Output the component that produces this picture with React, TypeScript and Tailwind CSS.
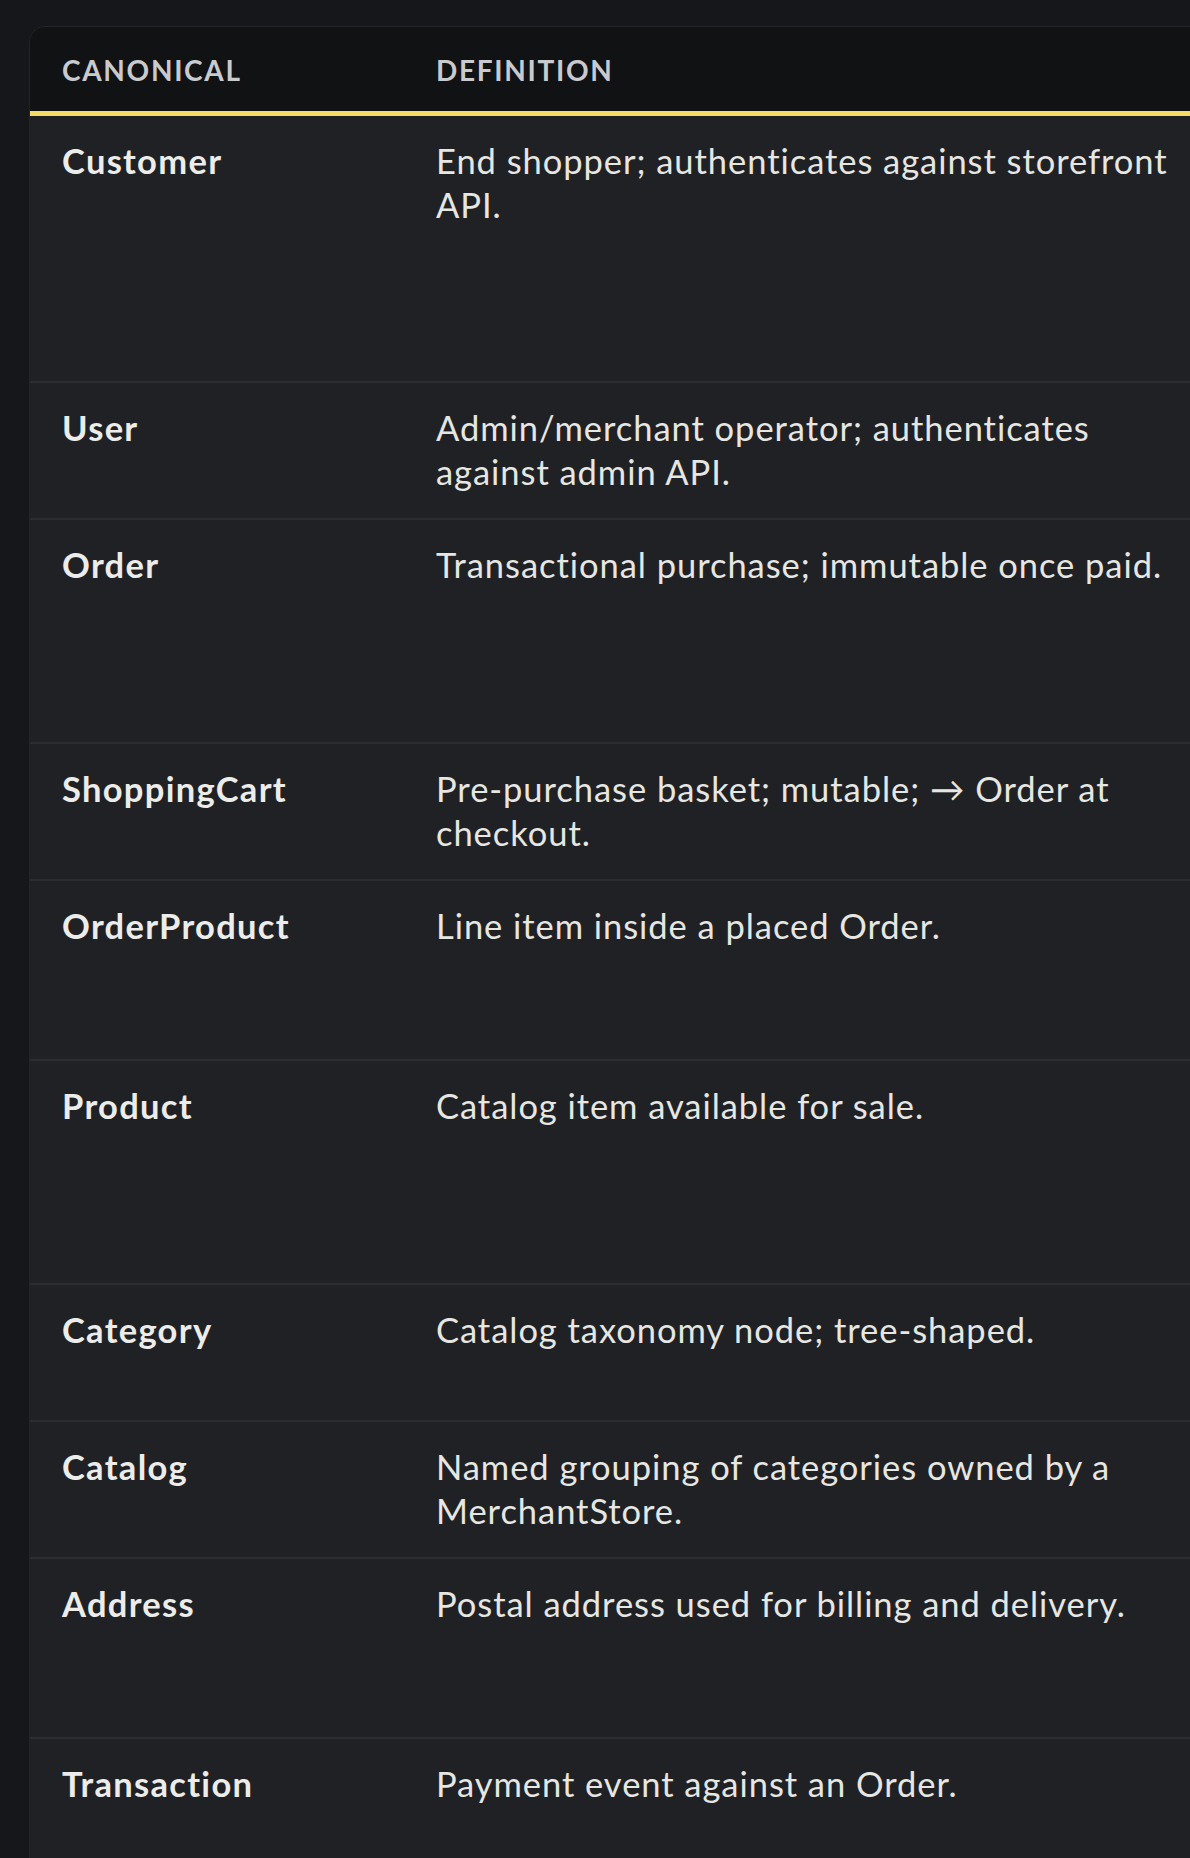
import React from 'react'

type Term = {
  name: string
  definition: string
  rowClass: string
}

const terms: Term[] = [
  { name: 'Customer', definition: 'End shopper; authenticates against storefront API.', rowClass: 'h-[267px]' },
  { name: 'User', definition: 'Admin/merchant operator; authenticates against admin API.', rowClass: 'h-[137px]' },
  { name: 'Order', definition: 'Transactional purchase; immutable once paid.', rowClass: 'h-[224px]' },
  { name: 'ShoppingCart', definition: 'Pre-purchase basket; mutable; \u2192 Order at checkout.', rowClass: 'h-[137px]' },
  { name: 'OrderProduct', definition: 'Line item inside a placed Order.', rowClass: 'h-[180px]' },
  { name: 'Product', definition: 'Catalog item available for sale.', rowClass: 'h-[224px]' },
  { name: 'Category', definition: 'Catalog taxonomy node; tree-shaped.', rowClass: 'h-[137px]' },
  { name: 'Catalog', definition: 'Named grouping of categories owned by a MerchantStore.', rowClass: 'h-[137px]' },
  { name: 'Address', definition: 'Postal address used for billing and delivery.', rowClass: 'h-[180px]' },
  { name: 'Transaction', definition: 'Payment event against an Order.', rowClass: 'h-[180px]' },
]

export default function App() {
  return (
    <div className="h-[1858px] w-full overflow-hidden bg-[#16171a] pl-[29px] pt-[26px] font-['Lato','Liberation_Sans',sans-serif]">
      <div className="w-[1400px] overflow-hidden rounded-tl-2xl border border-[#232428] bg-[#202125]">
        {/* Header */}
        <div className="grid h-[89px] grid-cols-[374px_809px_1fr] items-center border-b-[5px] border-[#f5dc64] bg-[#111214] pt-[1px]">
          <div className="pl-8 text-[28px] font-bold uppercase tracking-[0.06em] text-[#c9cacd]">Canonical</div>
          <div className="pl-8 text-[28px] font-bold uppercase tracking-[0.06em] text-[#c9cacd]">Definition</div>
          <div />
        </div>

        {/* Rows */}
        {terms.map((t) => (
          <div
            key={t.name}
            className={`grid grid-cols-[374px_809px_1fr] border-b-2 border-[#2b2d31] ${t.rowClass}`}
          >
            <div className="pl-8 pt-[23px] text-[34.5px] font-bold leading-[43.6px] tracking-[1.3px] text-[#ececea]">
              {t.name}
            </div>
            <div className="pl-8 pr-8 pt-[23px] text-[34.5px] leading-[43.6px] tracking-[0.95px] text-[#e6e6e2]">
              {t.definition}
            </div>
            <div />
          </div>
        ))}
      </div>
    </div>
  )
}
